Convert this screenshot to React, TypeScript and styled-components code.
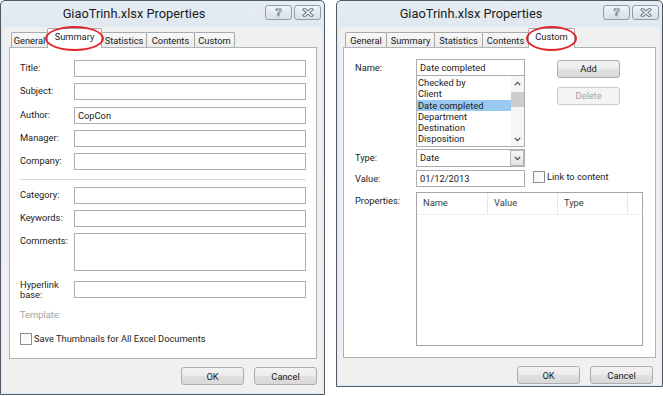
import React from 'react';
import styled, { createGlobalStyle } from 'styled-components';

const GlobalStyle = createGlobalStyle`
  html, body {
    margin: 0;
    padding: 0;
    background: #ffffff;
  }
  body {
    font-family: Roboto, "Liberation Sans", sans-serif;
    font-size: 9.3px;
    color: #1b1b1b;
  }
`;

interface TabDef {
    label: string;
    w: number;
    active?: boolean;
}

const summaryTabs: TabDef[] = [
    { label: 'General', w: 37 },
    { label: 'Summary', w: 55, active: true },
    { label: 'Statistics', w: 46 },
    { label: 'Contents', w: 49 },
    { label: 'Custom', w: 41 },
];

const customTabs: TabDef[] = [
    { label: 'General', w: 42 },
    { label: 'Summary', w: 49 },
    { label: 'Statistics', w: 49 },
    { label: 'Contents', w: 47 },
    { label: 'Custom', w: 47, active: true },
];

const customNames = ['Checked by', 'Client', 'Date completed', 'Department', 'Destination', 'Disposition'];

function CloseGlyph() {
    return (
        <svg width="12" height="9" viewBox="0 0 12 9">
            <path d="M2.5 1.5 L9.5 7.5 M9.5 1.5 L2.5 7.5" stroke="#6d7a88" strokeWidth="3.4" strokeLinecap="square" />
            <path d="M2.5 1.5 L9.5 7.5 M9.5 1.5 L2.5 7.5" stroke="#f3f6f9" strokeWidth="1.4" strokeLinecap="square" />
        </svg>
    );
}

function Chevron({ up }: { up?: boolean }) {
    return (
        <svg width="7" height="5" viewBox="0 0 7 5">
            <path d={up ? 'M0.8 4.2 L3.5 1.3 L6.2 4.2' : 'M0.8 0.8 L3.5 3.7 L6.2 0.8'} fill="none" stroke="#4a4a4a" strokeWidth="1.2" />
        </svg>
    );
}

function TitleArea() {
    return (
        <TitleBar>
            <Title>GiaoTrinh.xlsx Properties</Title>
            <CaptionButtons>
                <CaptionButton><HelpMark>?</HelpMark></CaptionButton>
                <CaptionButton><CloseGlyph /></CaptionButton>
            </CaptionButtons>
        </TitleBar>
    );
}

function Tabs({ tabs, inset }: { tabs: TabDef[]; inset: number }) {
    return (
        <TabStrip $inset={inset}>
            {tabs.map(t => (
                <Tab key={t.label} $w={t.w} $active={t.active}>
                    {t.label}
                    {t.active && <Ring />}
                </Tab>
            ))}
        </TabStrip>
    );
}

function SummaryPage() {
    return (
        <SummaryGrid>
            <FieldLabel>Title:</FieldLabel>
            <TextBox />
            <FieldLabel>Subject:</FieldLabel>
            <TextBox />
            <FieldLabel>Author:</FieldLabel>
            <TextBox>CopCon</TextBox>
            <FieldLabel>Manager:</FieldLabel>
            <TextBox />
            <FieldLabel>Company:</FieldLabel>
            <TextBox />
            <Separator />
            <FieldLabel>Category:</FieldLabel>
            <TextBox />
            <FieldLabel>Keywords:</FieldLabel>
            <TextBox />
            <FieldLabel>Comments:</FieldLabel>
            <TextBox $h={38} />
            <TwoLineLabel>Hyperlink<br />base:</TwoLineLabel>
            <TextBox $mt={3.3} />
            <DimLabel>Template:</DimLabel>
            <span />
            <CheckRow>
                <CheckBox />
                Save Thumbnails for All Excel Documents
            </CheckRow>
        </SummaryGrid>
    );
}

function CustomPage() {
    return (
        <CustomForm>
            <FormRow>
                <RowLabel $lh={17}>Name:</RowLabel>
                <NameColumn>
                    <TextBox>Date completed</TextBox>
                    <ListBox>
                        <ListItems>
                            {customNames.map(n => (
                                <ListItem key={n} $selected={n === 'Date completed'}>{n}</ListItem>
                            ))}
                        </ListItems>
                        <ScrollBar>
                            <ScrollArrow><Chevron up /></ScrollArrow>
                            <ScrollTrack><ScrollThumb /></ScrollTrack>
                            <ScrollArrow><Chevron /></ScrollArrow>
                        </ScrollBar>
                    </ListBox>
                </NameColumn>
                <SideButtons>
                    <PushButton>Add</PushButton>
                    <PushButton $disabled>Delete</PushButton>
                </SideButtons>
            </FormRow>
            <FormRow $mt={2}>
                <RowLabel $lh={18}>Type:</RowLabel>
                <ComboBox>
                    <ComboText>Date</ComboText>
                    <ComboArrow><Chevron /></ComboArrow>
                </ComboBox>
            </FormRow>
            <FormRow $mt={3}>
                <RowLabel $lh={17}>Value:</RowLabel>
                <NameColumn>
                    <TextBox>01/12/2013</TextBox>
                </NameColumn>
                <LinkOption>
                    <CheckBox />
                    Link to content
                </LinkOption>
            </FormRow>
            <FormRow $mt={4.5}>
                <RowLabel $lh={12} $pt={3}>Properties:</RowLabel>
                <PropertyList>
                    <PropertyHeader>
                        <HeaderCell $w={71}>Name</HeaderCell>
                        <HeaderCell $w={70}>Value</HeaderCell>
                        <HeaderCell $w={70}>Type</HeaderCell>
                        <HeaderCell $w={14} />
                    </PropertyHeader>
                </PropertyList>
            </FormRow>
        </CustomForm>
    );
}

export default function App() {
    return (
        <>
            <GlobalStyle />
            <Page>
                <Window $w={325} $h={395}>
                    <TitleArea />
                    <Client $pl={6} $pr={5} $pb={7}>
                        <Tabs tabs={summaryTabs} inset={2} />
                        <Panel>
                            <SummaryPage />
                        </Panel>
                        <ButtonRow $pr={0}>
                            <PushButton>OK</PushButton>
                            <PushButton>Cancel</PushButton>
                        </ButtonRow>
                    </Client>
                </Window>
                <Window $w={327} $h={387}>
                    <TitleArea />
                    <Client $pl={4} $pr={4} $pb={0}>
                        <Tabs tabs={customTabs} inset={2} />
                        <Panel>
                            <CustomPage />
                        </Panel>
                        <ButtonRow $pr={3}>
                            <PushButton>OK</PushButton>
                            <PushButton>Cancel</PushButton>
                        </ButtonRow>
                    </Client>
                </Window>
            </Page>
        </>
    );
}

const Page = styled.div`
    display: flex;
    align-items: flex-start;
    gap: 11px;
    width: 663px;
    height: 396px;
    overflow: hidden;
`;

const Window = styled.div<{ $w: number; $h: number }>`
    width: ${p => p.$w}px;
    height: ${p => p.$h}px;
    box-sizing: border-box;
    display: flex;
    flex-direction: column;
    border: 1px solid #505862;
    border-radius: 5px 5px 0 0;
    background: linear-gradient(#e6edf4, #dfe7ef 30px, #e8edf2);
    padding: 0 2px 2px;
`;

const TitleBar = styled.div`
    height: 26px;
    display: flex;
    align-items: center;
    flex-shrink: 0;
`;

const Title = styled.div`
    flex: 1;
    text-align: center;
    font-size: 12.8px;
    color: #1c1c1c;
    padding-bottom: 1px;
`;

const CaptionButtons = styled.div`
    display: flex;
    gap: 2px;
    align-self: flex-start;
    margin-top: 4px;
    margin-right: 1px;
`;

const CaptionButton = styled.div`
    width: 27px;
    height: 15px;
    box-sizing: border-box;
    border: 1px solid #8f9cab;
    border-radius: 3px;
    background: linear-gradient(#f3f6f9, #e2e8ef 50%, #d8e0e9);
    display: flex;
    align-items: center;
    justify-content: center;
`;

const HelpMark = styled.span`
    font-family: "Liberation Sans", sans-serif;
    font-size: 11px;
    font-weight: bold;
    line-height: 11px;
    color: #f5f7fa;
    -webkit-text-stroke: 0.7px #6d7a88;
`;

const Client = styled.div<{ $pl: number; $pr: number; $pb: number }>`
    flex: 1;
    min-height: 0;
    display: flex;
    flex-direction: column;
    background: #f0f0f0;
    padding: 2px ${p => p.$pr}px ${p => p.$pb}px ${p => p.$pl}px;
`;

const TabStrip = styled.div<{ $inset: number }>`
    position: relative;
    z-index: 2;
    display: flex;
    align-items: flex-end;
    height: 18px;
    padding-left: ${p => p.$inset}px;
`;

const Tab = styled.div<{ $w: number; $active?: boolean }>`
    position: relative;
    box-sizing: border-box;
    width: ${p => p.$w}px;
    height: ${p => (p.$active ? 20 : 15)}px;
    margin-left: -1px;
    margin-bottom: ${p => (p.$active ? -1 : 0)}px;
    border: 1px solid #a9a9a9;
    border-bottom: none;
    border-radius: 2px 2px 0 0;
    background: ${p => (p.$active ? '#ffffff' : 'linear-gradient(#f8f8f8, #ebebeb)')};
    z-index: ${p => (p.$active ? 2 : 1)};
    display: flex;
    align-items: ${p => (p.$active ? 'flex-start' : 'center')};
    padding-top: ${p => (p.$active ? 2 : 0)}px;
    justify-content: center;
    white-space: nowrap;
    &:first-child {
        margin-left: 0;
    }
`;

const Ring = styled.span`
    position: absolute;
    left: -3px;
    right: -3px;
    top: -3px;
    bottom: -3px;
    border: 2px solid #e0242b;
    border-radius: 50%;
    pointer-events: none;
`;

const Panel = styled.div`
    position: relative;
    z-index: 1;
    flex: 1;
    min-height: 0;
    background: #ffffff;
    border: 1px solid #b2b2b2;
`;

const ButtonRow = styled.div<{ $pr: number }>`
    display: flex;
    justify-content: flex-end;
    gap: 10px;
    margin-top: 8px;
    padding-right: ${p => p.$pr}px;
`;

const PushButton = styled.div<{ $disabled?: boolean }>`
    width: 63px;
    height: 18px;
    box-sizing: border-box;
    border: 1px solid ${p => (p.$disabled ? '#cacaca' : '#acacac')};
    border-radius: 3px;
    background: ${p => (p.$disabled ? '#f4f4f4' : 'linear-gradient(#f3f3f3, #ebebeb 50%, #e0e0e0 51%, #d9d9d9)')};
    color: ${p => (p.$disabled ? '#a5a5a5' : '#1b1b1b')};
    display: flex;
    align-items: center;
    justify-content: center;
`;

const SummaryGrid = styled.div`
    display: grid;
    grid-template-columns: 54px 1fr;
    row-gap: 6.3px;
    align-items: start;
    padding: 12px 10px 0 10px;
`;

const FieldLabel = styled.div`
    line-height: 16px;
    white-space: nowrap;
`;

const TwoLineLabel = styled.div`
    line-height: 10.5px;
    margin-top: 2px;
`;

const DimLabel = styled.div`
    line-height: 12px;
    margin-top: 2px;
    color: #a2a2a2;
`;

const TextBox = styled.div<{ $h?: number; $mt?: number }>`
    height: ${p => p.$h || 17}px;
    margin-top: ${p => p.$mt || 0}px;
    box-sizing: border-box;
    border: 1px solid #abadb3;
    background: #ffffff;
    padding: 0 3px;
    line-height: 15px;
    white-space: nowrap;
`;

const Separator = styled.div`
    grid-column: 1 / -1;
    height: 1px;
    margin-top: 3px;
    background: #d8d8d8;
`;

const CheckRow = styled.label`
    grid-column: 1 / -1;
    display: flex;
    align-items: center;
    gap: 2px;
    margin-top: 6px;
    line-height: 12px;
`;

const CheckBox = styled.span`
    width: 12px;
    height: 12px;
    box-sizing: border-box;
    border: 1px solid #8e8f8f;
    background: linear-gradient(135deg, #f4f4f4, #ffffff);
    flex-shrink: 0;
`;

const CustomForm = styled.div`
    display: flex;
    flex-direction: column;
    padding: 11px 0 0 11px;
`;

const FormRow = styled.div<{ $mt?: number }>`
    display: flex;
    align-items: flex-start;
    margin-top: ${p => p.$mt || 0}px;
`;

const RowLabel = styled.div<{ $lh: number; $pt?: number }>`
    width: 61px;
    flex-shrink: 0;
    line-height: ${p => p.$lh}px;
    padding-top: ${p => p.$pt || 0}px;
`;

const NameColumn = styled.div`
    width: 109px;
    display: flex;
    flex-direction: column;
`;

const ListBox = styled.div`
    height: 72px;
    margin-top: -1px;
    box-sizing: border-box;
    border: 1px solid #abadb3;
    background: #ffffff;
    display: flex;
`;

const ListItems = styled.div`
    flex: 1;
    padding-top: 1px;
`;

const ListItem = styled.div<{ $selected?: boolean }>`
    line-height: 11.3px;
    padding-left: 1px;
    background: ${p => (p.$selected ? '#99c9f0' : 'transparent')};
    white-space: nowrap;
`;

const ScrollBar = styled.div`
    width: 13px;
    display: flex;
    flex-direction: column;
    background: #f6f6f6;
`;

const ScrollArrow = styled.div`
    height: 14px;
    display: flex;
    align-items: center;
    justify-content: center;
`;

const ScrollTrack = styled.div`
    flex: 1;
    padding-top: 2px;
`;

const ScrollThumb = styled.div`
    height: 15px;
    background: #cdcdcd;
`;

const SideButtons = styled.div`
    display: flex;
    flex-direction: column;
    gap: 9px;
    margin-left: 32px;
    padding-top: 0.5px;
`;

const ComboBox = styled.div`
    width: 109px;
    height: 18px;
    box-sizing: border-box;
    border: 1px solid #abadb3;
    background: #ffffff;
    display: flex;
    align-items: stretch;
`;

const ComboText = styled.div`
    flex: 1;
    padding-left: 3px;
    line-height: 16px;
`;

const ComboArrow = styled.div`
    width: 14px;
    box-sizing: border-box;
    border: 1px solid #b9b9b9;
    background: linear-gradient(#f7f7f7, #e3e3e3);
    display: flex;
    align-items: center;
    justify-content: center;
`;

const LinkOption = styled.label`
    display: flex;
    align-items: center;
    gap: 2px;
    margin: 1px 0 0 8px;
    line-height: 12px;
`;

const PropertyList = styled.div`
    width: 227px;
    height: 154px;
    box-sizing: border-box;
    border: 1px solid #a5a5a5;
    background: #ffffff;
`;

const PropertyHeader = styled.div`
    display: flex;
    height: 21px;
    border-bottom: 1px solid #eeeeee;
`;

const HeaderCell = styled.div<{ $w: number }>`
    width: ${p => p.$w}px;
    box-sizing: border-box;
    border-right: 1px solid #e6e6e6;
    padding-left: 6px;
    line-height: 20px;
    color: #3d3d3d;
    &:last-child {
        border-right: none;
    }
`;
